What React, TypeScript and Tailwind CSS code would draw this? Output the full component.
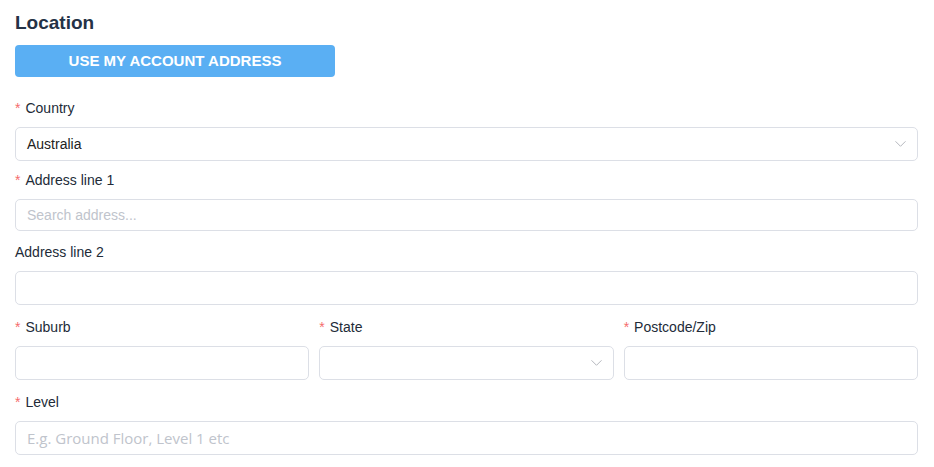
import React from "react";

const font = { fontFamily: '"Liberation Sans", Arial, sans-serif' };

function Chevron() {
  return (
    <svg width="11" height="7" viewBox="0 0 11 7" className="absolute right-[11px] top-1/2 -translate-y-1/2">
      <polyline points="0.5,0.8 5.5,5.8 10.5,0.8" fill="none" stroke="#b4b7bd" strokeWidth="1" />
    </svg>
  );
}

function Label({ text, required = true, className = "" }: { text: string; required?: boolean; className?: string }) {
  return (
    <div className={"h-[20px] leading-[20px] text-[14px] text-[#222b38] flex items-center " + className}>
      {required && <span className="text-[#f56c6c] mr-[5px]">*</span>}
      <span>{text}</span>
    </div>
  );
}

function Box({ h = "h-[34px]", children, className = "" }: { h?: string; children?: React.ReactNode; className?: string }) {
  return (
    <div className={"relative mt-[9px] border border-[#dcdfe6] rounded-[5px] bg-white flex items-center pl-[11px] text-[14px] " + h + " " + className}>
      {children}
    </div>
  );
}

export default function App() {
  return (
    <div className="w-[934px] h-[467px] bg-white pl-[15px] pr-[16px] pt-[11px]" style={font}>
      <div className="text-[19px] leading-[24px] font-bold text-[#243246]">Location</div>
      <button className="mt-[10px] w-[320px] h-[32px] rounded-[4px] bg-[#5aaff3] text-white font-bold text-[15px] flex items-center justify-center">
        USE MY ACCOUNT ADDRESS
      </button>

      <Label text="Country" className="mt-[21px]" />
      <Box>
        <span className="text-[#222]">Australia</span>
        <Chevron />
      </Box>

      <Label text="Address line 1" className="mt-[9px]" />
      <Box h="h-[32px]">
        <span className="text-[#c0c4cc]">Search address...</span>
      </Box>

      <Label text="Address line 2" required={false} className="mt-[11px]" />
      <Box />

      <div className="grid grid-cols-3 gap-x-[10px] mt-[12px]">
        <div>
          <Label text="Suburb" />
          <Box />
        </div>
        <div>
          <Label text="State" />
          <Box>
            <Chevron />
          </Box>
        </div>
        <div>
          <Label text="Postcode/Zip" />
          <Box />
        </div>
      </div>

      <Label text="Level" className="mt-[12px]" />
      <Box>
        <span className="text-[#c0c4cc] text-[15px]" style={{ fontFamily: '"Open Sans", "Noto Sans", sans-serif' }}>
          E.g. Ground Floor, Level 1 etc
        </span>
      </Box>
    </div>
  );
}
